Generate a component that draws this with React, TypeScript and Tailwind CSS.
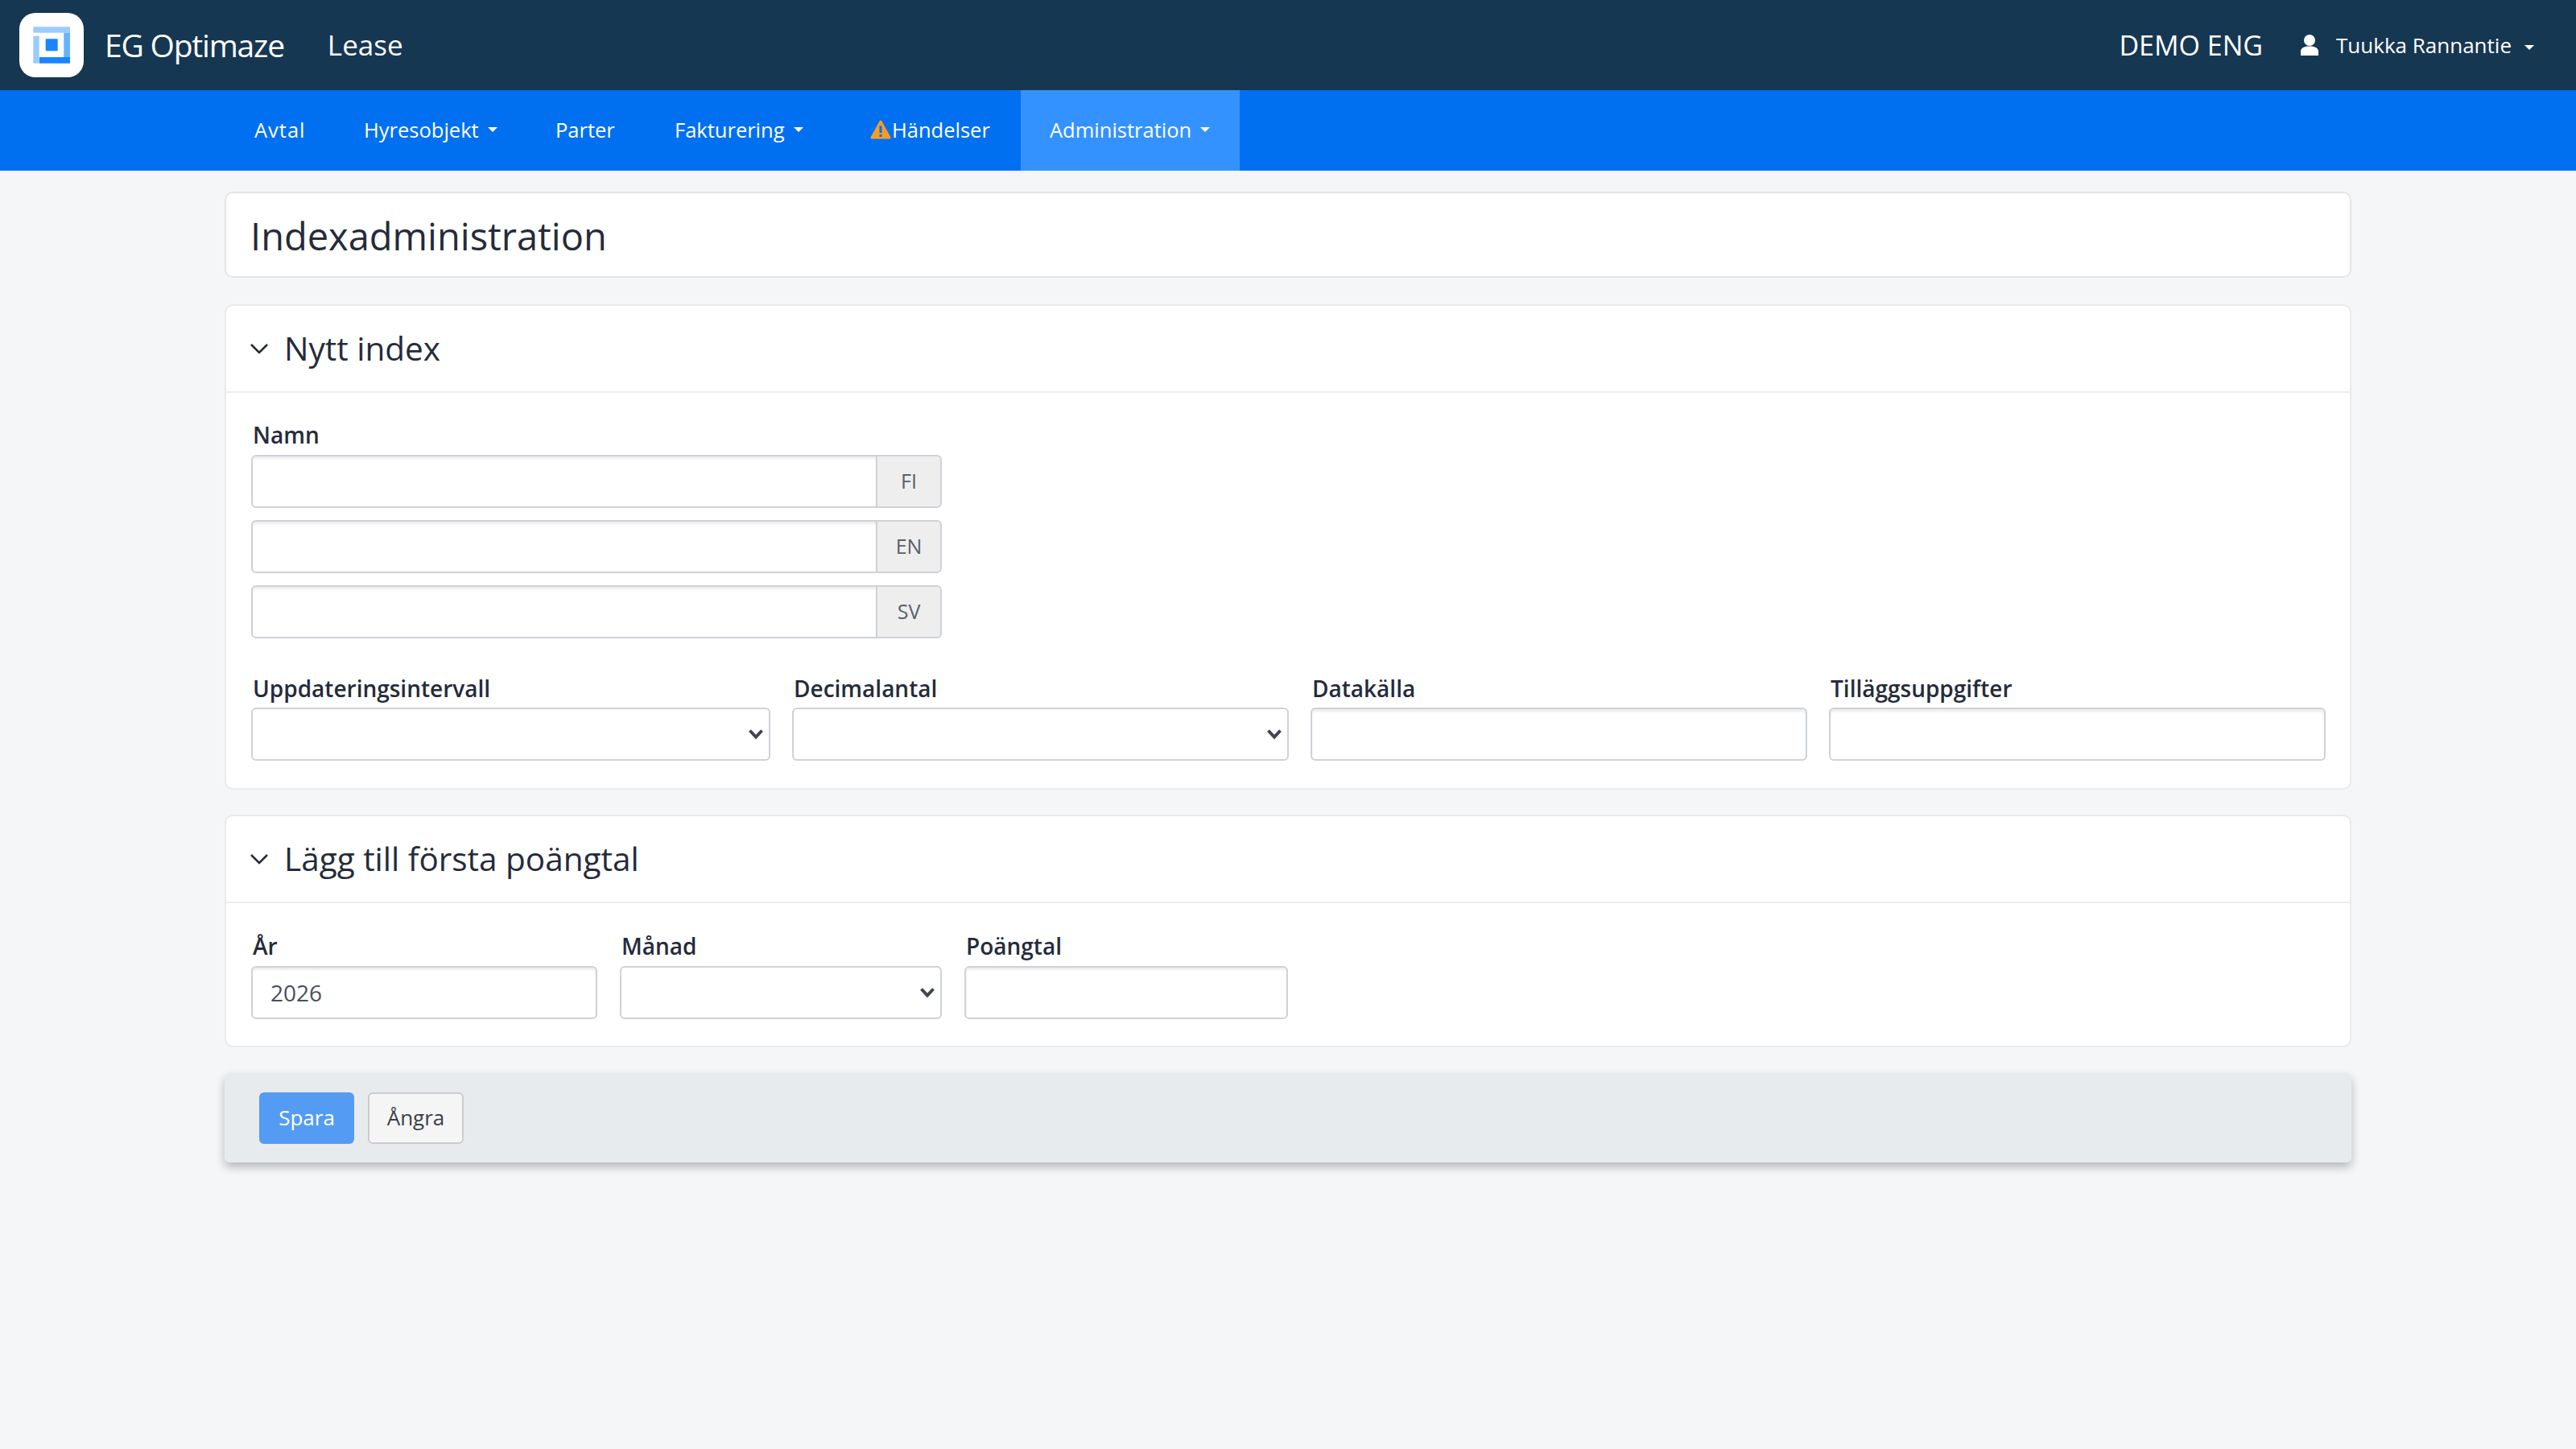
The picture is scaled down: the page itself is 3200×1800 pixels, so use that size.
import React from "react";

const font = { fontFamily: '"Open Sans", Lato, sans-serif' };

function Caret() {
  return <span className="ml-[11px] inline-block h-0 w-0 border-x-[6px] border-t-[6px] border-x-transparent border-t-white" />;
}

function Logo() {
  return (
    <svg width="80" height="80" viewBox="0 0 80 80" className="shrink-0">
      <rect width="80" height="80" rx="20" fill="#fff" />
      <g transform="translate(-24 -16)">
        <rect x="41.3" y="33.3" width="45.7" height="7.4" fill="#99ccff" />
        <rect x="41.3" y="44.7" width="7.4" height="34" fill="#99ccff" />
        <rect x="79.3" y="40.7" width="7.7" height="30.3" fill="#66b3ff" />
        <rect x="49" y="71" width="38" height="7.7" fill="#1a85ff" />
        <rect x="56.7" y="48.3" width="15" height="15" rx="1" fill="#1a85ff" />
      </g>
    </svg>
  );
}

function NavItem({ label, caret, active, warn, cls }: { label: string; caret?: boolean; active?: boolean; warn?: boolean; cls: string }) {
  return (
    <div className={`flex h-full items-center pb-[2px] text-[25.5px] text-white ${cls} ${active ? "bg-[#3492ff]" : ""}`}>
      {warn && (
        <svg width="26" height="26" viewBox="0 0 26 26" className="mr-[1px] shrink-0">
          <path d="M13 3 L24 23 H2 Z" fill="#f49c2a" stroke="#f49c2a" strokeWidth="3" strokeLinejoin="round" />
          <rect x="11.500" y="8.500" width="3" height="8.500" fill="#0070f0" />
          <rect x="11.500" y="19" width="3" height="3" fill="#0070f0" />
        </svg>
      )}
      <span>{label}</span>
      {caret && <Caret />}
    </div>
  );
}

function Label({ children }: { children: React.ReactNode }) {
  return <label className="ml-[2px] block text-[28px] font-semibold leading-[36px] text-[#252b3a]">{children}</label>;
}

const inputCls =
  "block h-[66px] w-full rounded-[6px] border-2 border-[#ced2d8] bg-white px-[22px] text-[28px] text-[#495057] shadow-[inset_0_3px_3px_rgba(0,0,0,0.075)] outline-none";

function Select() {
  return (
    <div className="relative">
      <select className="block h-[66px] w-full appearance-none rounded-[6px] border-2 border-[#ced2d8] bg-white px-[22px] text-[28px] outline-none">
        <option></option>
      </select>
      <svg width="20" height="14" viewBox="0 0 20 14" className="pointer-events-none absolute right-[8px] top-[26px]">
        <path d="M2.500 2.500 L10 10.500 L17.500 2.500" fill="none" stroke="#3f4650" strokeWidth="4" />
      </svg>
    </div>
  );
}

function LangInput({ lang }: { lang: string }) {
  return (
    <div className="flex h-[66px] w-[858px]">
      <input className="h-full min-w-0 flex-1 rounded-l-[6px] border-2 border-[#ced2d8] bg-white shadow-[inset_0_3px_3px_rgba(0,0,0,0.075)] outline-none" />
      <div className="-ml-[2px] flex h-full w-[82px] items-center justify-center rounded-r-[6px] border-2 border-[#ced2d8] bg-[#eeeeee] text-[25px] text-[#5a6068]">
        {lang}
      </div>
    </div>
  );
}

function SectionHeader({ title }: { title: string }) {
  return (
    <div className="flex h-[108px] items-center border-b-2 border-[#eceded] pl-[29px]">
      <svg width="24" height="16" viewBox="0 0 24 16" className="shrink-0">
        <path d="M2 3 L12 13 L22 3" fill="none" stroke="#252b3a" strokeWidth="2.600" />
      </svg>
      <h2 className="ml-[19px] text-[40.5px] font-normal text-[#252b3a]">{title}</h2>
    </div>
  );
}

export default function App() {
  return (
    <div className="min-h-[1800px] bg-[#f5f6f8]" style={font}>
      <header className="flex h-[112px] items-center bg-[#163752] pl-[24px] pr-[52px] text-white">
        <Logo />
        <span className="ml-[26px] text-[39px] font-medium tracking-[-1.2px]">EG Optimaze</span>
        <span className="ml-[54px] text-[35px]">Lease</span>
        <span className="ml-auto text-[34px]">DEMO ENG</span>
        <svg width="24" height="28" viewBox="0 0 24 28" className="ml-[46px]">
          <circle cx="12" cy="8" r="7" fill="#fff" />
          <path d="M1 27 V22 C1 17 6 15.500 12 15.500 S23 17 23 22 V27 Z" fill="#fff" />
        </svg>
        <span className="ml-[21px] text-[26px]">Tuukka Rannantie</span>
        <span className="ml-[5px]"><Caret /></span>
      </header>
      <nav className="flex h-[100px] items-center bg-[#0070f0] pl-[280px]">
        <NavItem cls="w-[136px] pl-[36px] tracking-[1px]" label="Avtal" />
        <NavItem cls="w-[238px] pl-[36px]" label="Hyresobjekt" caret />
        <NavItem cls="w-[146px] pl-[36px]" label="Parter" />
        <NavItem cls="w-[233px] pl-[38px]" label="Fakturering" caret />
        <NavItem cls="w-[235px] pl-[48px]" label="Händelser" warn />
        <NavItem cls="w-[272px] pl-[36px]" label="Administration" caret active />
      </nav>
      <main className="px-[279px] pt-[26px]">
        <section className="flex h-[107px] items-center rounded-[10px] border-2 border-[#e4e5e7] bg-white pl-[30px] pt-[3px]">
          <h1 className="text-[47px] font-normal text-[#252b3a]">Indexadministration</h1>
        </section>

        <section className="mt-[33px] h-[603px] rounded-[10px] border-2 border-[#e9eaec] bg-white">
          <SectionHeader title="Nytt index" />
          <div className="pl-[31px] pr-[30px] pt-[34px]">
            <Label>Namn</Label>
            <div className="mt-[7px] flex flex-col gap-[15px]">
              <LangInput lang="FI" />
              <LangInput lang="EN" />
              <LangInput lang="SV" />
            </div>
            <div className="mt-[44px] flex gap-[27px]">
              <div className="w-[645px]"><Label>Uppdateringsintervall</Label><div className="mt-[6px]"><Select /></div></div>
              <div className="w-[617px]"><Label>Decimalantal</Label><div className="mt-[6px]"><Select /></div></div>
              <div className="w-[617px]"><Label>Datakälla</Label><input className={`mt-[6px] ${inputCls}`} /></div>
              <div className="w-[617px]"><Label>Tilläggsuppgifter</Label><input className={`mt-[6px] ${inputCls}`} /></div>
            </div>
          </div>
        </section>

        <section className="mt-[31px] h-[289px] rounded-[10px] border-2 border-[#e9eaec] bg-white">
          <SectionHeader title="Lägg till första poängtal" />
          <div className="flex gap-[28px] pl-[31px] pt-[35px]">
            <div className="w-[430px]"><Label>År</Label><input className={`mt-[7px] ${inputCls}`} defaultValue="2026" /></div>
            <div className="w-[400px]"><Label>Månad</Label><div className="mt-[7px]"><Select /></div></div>
            <div className="w-[402px]"><Label>Poängtal</Label><input className={`mt-[7px] ${inputCls}`} /></div>
          </div>
        </section>

        <section className="mt-[32px] flex h-[111px] items-center gap-[17px] rounded-[6px] bg-[#e8ebee] pl-[43px] shadow-[0_6px_12px_rgba(0,0,0,0.25)]">
          <button className="h-[64px] w-[118px] rounded-[6px] bg-[#549cf3] text-[26px] text-white">Spara</button>
          <button className="h-[64px] w-[119px] rounded-[6px] border-2 border-[#cccccc] bg-[#f5f5f5] text-[26px] text-[#3a3f48]">Ångra</button>
        </section>
      </main>
    </div>
  );
}
